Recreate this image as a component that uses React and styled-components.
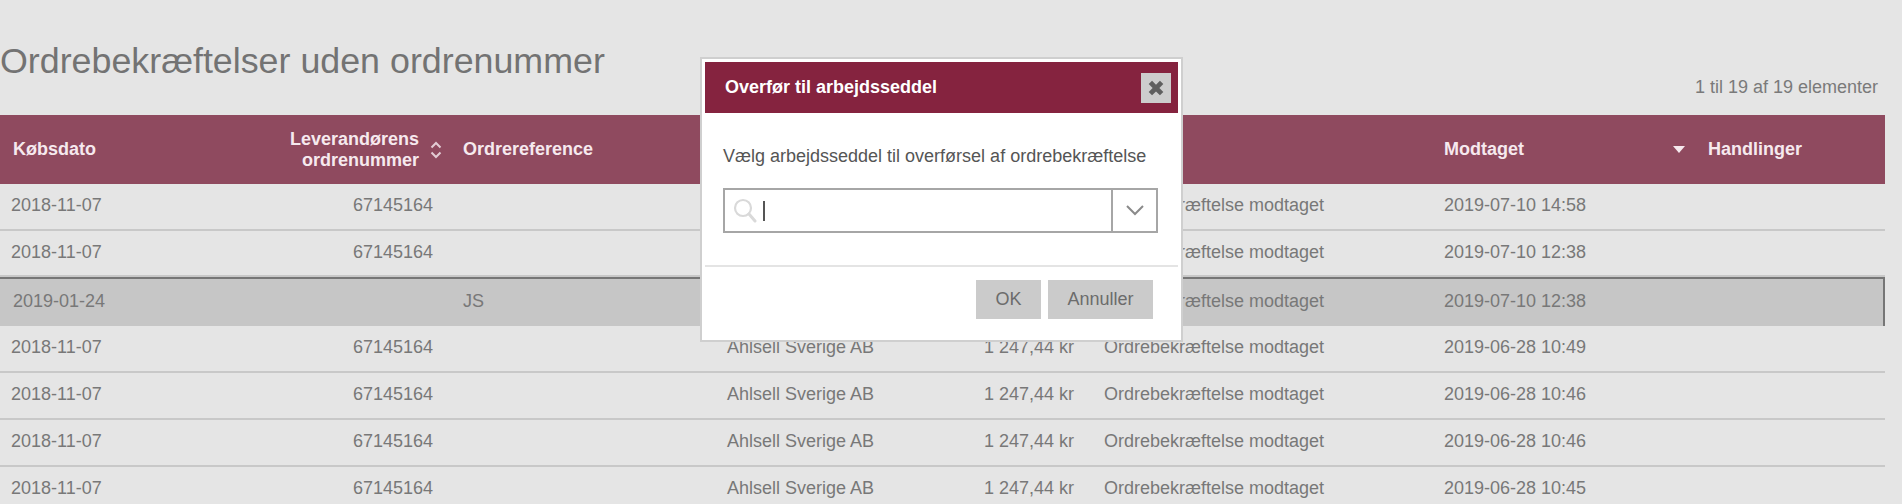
import React from "react";
import styled, { createGlobalStyle } from "styled-components";

const Global = createGlobalStyle`
  html, body { margin: 0; padding: 0; height: 504px; overflow: hidden; background: #e5e5e5; }
  body { font-family: "Liberation Sans", Arial, sans-serif; color: #737373; }
`;
const Page = styled.div`
  position: relative; width: 1902px; height: 504px; overflow: hidden; background: #e5e5e5;
`;
const TitleBar = styled.div`
  display: flex; justify-content: space-between; align-items: flex-start;
  height: 115px; width: 1878px; box-sizing: border-box; padding-top: 40px;
`;
const Title = styled.h1`
  margin: 0; font-weight: 400; font-size: 35.8px; line-height: 42px; color: #737373;
`;
const Count = styled.div`
  font-size: 18px; line-height: 20px; margin-top: 37px; color: #7a7a7a; white-space: nowrap;
`;
const Table = styled.div` width: 1885px; `;
const cols = "250px 199px 264px 264px 113px 340px 264px 191px";
const HeadRow = styled.div`
  display: grid; grid-template-columns: ${cols}; align-items: center; height: 69px;
  background: #8f4a5f; color: #f6e9ee; font-weight: 700; font-size: 18px; line-height: 21px;
`;
const HeadCell = styled.div`
  display: flex; align-items: center; box-sizing: border-box;
  justify-content: ${p => (p.$right ? "flex-end" : p.$spread ? "space-between" : "flex-start")};
  padding: ${p => p.$pad || "0 0 0 14px"};
  gap: ${p => p.$gap || "0"};
  text-align: ${p => (p.$right ? "right" : "left")};
  white-space: nowrap;
`;
const Row = styled.div`
  display: grid; grid-template-columns: ${cols}; align-items: center; box-sizing: border-box;
  height: ${p => p.$h}px; font-size: 18px; line-height: 20px; color: #787878; padding-bottom: 3px;
  background: ${p => (p.$sel ? "#c6c6c6" : "#e5e5e5")};
  border-bottom: ${p => (p.$sel ? "0" : "2px solid #c8c8c8")};
  border-top: ${p => (p.$sel ? "2px solid #767676" : "0")};
  border-right: ${p => (p.$sel ? "2px solid #767676" : "0")};
`;
const Cell = styled.div`
  box-sizing: border-box; white-space: nowrap;
  padding: ${p => (p.$right ? "0 16px 0 0" : p.$first ? `0 0 0 ${p.$first}px` : "0 0 0 14px")};
  text-align: ${p => (p.$right ? "right" : "left")};
`;
const Modal = styled.div`
  position: absolute; left: 700px; top: 57px; width: 483px; height: 285px; box-sizing: border-box;
  background: #fff; border: 2px solid #cfcfcf; padding: 3px; display: flex; flex-direction: column;
`;
const ModalHead = styled.div`
  display: flex; justify-content: space-between; align-items: center; height: 51px; flex: none;
  background: #85233f; color: #fff; font-weight: 700; font-size: 18px; padding: 0 7px 0 20px;
`;
const Close = styled.button`
  width: 30px; height: 30px; border: 0; padding: 0; background: #cdcdcd;
  display: flex; align-items: center; justify-content: center;
`;
const ModalBody = styled.div`
  padding: 33px 0 0 18px; height: 154px; box-sizing: border-box; flex: none;
  border-bottom: 2px solid #e4e4e4;
`;
const Prompt = styled.div`
  font-size: 18px; line-height: 20px; color: #555; white-space: nowrap;
`;
const Combo = styled.div`
  display: flex; width: 435px; height: 45px; box-sizing: border-box; margin-top: 22px;
  border: 2px solid #a6a6a6;
`;
const Field = styled.div`
  flex: 1; display: flex; align-items: center; padding-left: 8px; gap: 6px;
`;
const Caret = styled.span`
  display: block; width: 2px; height: 20px; background: #555;
`;
const Toggle = styled.div`
  width: 43px; border-left: 2px solid #a6a6a6; display: flex; align-items: center; justify-content: center;
`;
const Footer = styled.div`
  display: flex; justify-content: flex-end; gap: 7px; padding: 13px 25px 0 0;
`;
const Btn = styled.button`
  height: 39px; padding: 0; width: ${p => p.$w}px; border: 0; background: #cbcbcb; color: #6c6c6c;
  font-family: inherit; font-size: 18px; line-height: 30px; padding-bottom: 2px;
`;

const rows = [
  { d: "2018-11-07", n: "67145164", r: "", m: "2019-07-10 14:58", h: 47 },
  { d: "2018-11-07", n: "67145164", r: "", m: "2019-07-10 12:38", h: 46 },
  { d: "2019-01-24", n: "", r: "JS", m: "2019-07-10 12:38", h: 49, sel: true },
  { d: "2018-11-07", n: "67145164", r: "", s: "Ahlsell Sverige AB", a: "1 247,44 kr", m: "2019-06-28 10:49", h: 47 },
  { d: "2018-11-07", n: "67145164", r: "", s: "Ahlsell Sverige AB", a: "1 247,44 kr", m: "2019-06-28 10:46", h: 47 },
  { d: "2018-11-07", n: "67145164", r: "", s: "Ahlsell Sverige AB", a: "1 247,44 kr", m: "2019-06-28 10:46", h: 47 },
  { d: "2018-11-07", n: "67145164", r: "", s: "Ahlsell Sverige AB", a: "1 247,44 kr", m: "2019-06-28 10:45", h: 47 },
];

const SortIcon = () => (
  <svg width="12" height="18" viewBox="0 0 12 18" fill="none" stroke="#e3ccd4" strokeWidth="2">
    <path d="M1.5 6.5 6 2l4.5 4.5M1.5 11.5 6 16l4.5-4.5" />
  </svg>
);
const SortDown = () => (
  <svg width="12" height="7" viewBox="0 0 12 7"><path d="M0 0h12L6 7z" fill="#f6e9ee" /></svg>
);
const XIcon = () => (
  <svg width="18" height="18" viewBox="0 0 16 16"><path d="M1.5 4.5 4.5 1.5 8 5 11.5 1.5 14.5 4.5 11 8 14.5 11.5 11.5 14.5 8 11 4.5 14.5 1.5 11.5 5 8z" fill="#5f5f5f" /></svg>
);
const SearchIcon = () => (
  <svg width="24" height="26" viewBox="0 0 24 26" fill="none" stroke="#d9d9d9">
    <circle cx="10" cy="10" r="8" strokeWidth="2.2" />
    <path d="M16 16l6 7" strokeWidth="3" strokeLinecap="round" />
  </svg>
);
const Chevron = () => (
  <svg width="18" height="11" viewBox="0 0 18 11" fill="none" stroke="#8a8a8a" strokeWidth="2"><path d="M1 1l8 8 8-8" /></svg>
);

export default function App() {
  return (
    <Page>
      <Global />
      <TitleBar>
        <Title>Ordrebekræftelser uden ordrenummer</Title>
        <Count>1 til 19 af 19 elementer</Count>
      </TitleBar>
      <Table>
        <HeadRow>
          <HeadCell $pad="0 0 0 13px">Købsdato</HeadCell>
          <HeadCell $right $pad="0 7px 0 0" $gap="11px">
            <span>Leverandørens<br />ordrenummer</span><SortIcon />
          </HeadCell>
          <HeadCell>Ordrereference</HeadCell>
          <HeadCell />
          <HeadCell />
          <HeadCell />
          <HeadCell $spread $pad="0 9px 0 14px">Modtaget<SortDown /></HeadCell>
          <HeadCell>Handlinger</HeadCell>
        </HeadRow>
        {rows.map((r, i) => (
          <Row key={i} $h={r.h} $sel={r.sel}>
            <Cell $first={r.sel ? 13 : 11}>{r.d}</Cell>
            <Cell $right>{r.n}</Cell>
            <Cell>{r.r}</Cell>
            <Cell>{r.s}</Cell>
            <Cell $right>{r.a}</Cell>
            <Cell>Ordrebekræftelse modtaget</Cell>
            <Cell>{r.m}</Cell>
            <Cell />
          </Row>
        ))}
      </Table>
      <Modal>
        <ModalHead>
          Overfør til arbejdsseddel
          <Close aria-label="Luk"><XIcon /></Close>
        </ModalHead>
        <ModalBody>
          <Prompt>Vælg arbejdsseddel til overførsel af ordrebekræftelse</Prompt>
          <Combo>
            <Field><SearchIcon /><Caret /></Field>
            <Toggle><Chevron /></Toggle>
          </Combo>
        </ModalBody>
        <Footer>
          <Btn $w={65}>OK</Btn>
          <Btn $w={105}>Annuller</Btn>
        </Footer>
      </Modal>
    </Page>
  );
}
